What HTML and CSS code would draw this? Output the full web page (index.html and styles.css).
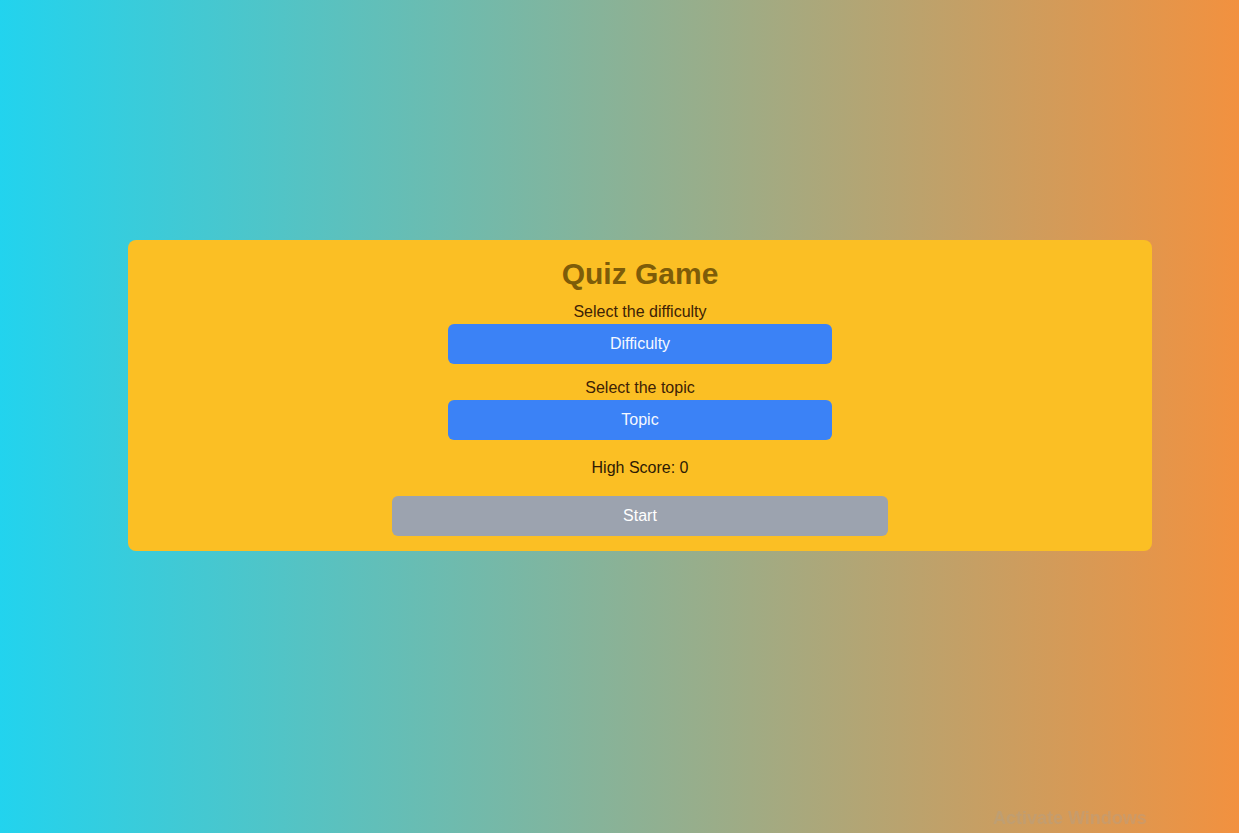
FILE: index.html
```html
<!DOCTYPE html>
<html lang="en">
<head>
<meta charset="utf-8">
<title>Quiz Game</title>
<link rel="stylesheet" href="styles.css">
</head>
<body>
<main class="page">
  <section class="card">
    <h1 class="title">Quiz Game</h1>
    <div class="field">
      <p class="label">Select the difficulty</p>
      <button class="select-btn">Difficulty</button>
    </div>
    <div class="field field-topic">
      <p class="label">Select the topic</p>
      <button class="select-btn">Topic</button>
    </div>
    <p class="score">High Score: 0</p>
    <button class="start-btn">Start</button>
  </section>
</main>
<div class="watermark">Activate Windows</div>
</body>
</html>
```

FILE: styles.css
```css
* { box-sizing: border-box; }
html, body {
  margin: 0;
  padding: 0;
  height: 100%;
}
body {
  font-family: "Liberation Sans", Arial, sans-serif;
  background: linear-gradient(to right, #22d3ee 0%, #f2913f 100%);
  overflow: hidden;
}
.page {
  padding: 240px 0 0 128px;
  display: flex;
}
.card {
  width: 1024px;
  background: #fbbf24;
  border-radius: 8px;
  padding: 16px 16px 15px;
  display: flex;
  flex-direction: column;
  align-items: center;
}
.title {
  margin: 0 0 8px;
  font-size: 30px;
  line-height: 36px;
  font-weight: 700;
  color: #7d5c09;
}
.field {
  display: flex;
  flex-direction: column;
  align-items: center;
  width: 384px;
}
.field-topic { margin-top: 12px; }
.label {
  margin: 0;
  font-size: 16px;
  line-height: 24px;
  color: #3d2206;
}
.select-btn {
  width: 384px;
  height: 40px;
  border: none;
  border-radius: 6px;
  background: #3b82f6;
  color: #f4f8ff;
  font-family: "Liberation Sans", Arial, sans-serif;
  font-size: 16px;
  padding: 0;
}
.score {
  margin: 16px 0 0;
  font-size: 16px;
  line-height: 24px;
  color: #2d1a04;
}
.start-btn {
  margin-top: 16px;
  width: 496px;
  height: 40px;
  border: none;
  border-radius: 6px;
  background: #9ca3af;
  color: #ffffff;
  font-family: "Liberation Sans", Arial, sans-serif;
  font-size: 16px;
  padding: 0;
}
.watermark {
  position: fixed;
  left: 993px;
  top: 808px;
  font-size: 18px;
  font-weight: 700;
  color: rgba(170, 160, 150, 0.35);
  font-family: "Liberation Sans", Arial, sans-serif;
}
```
